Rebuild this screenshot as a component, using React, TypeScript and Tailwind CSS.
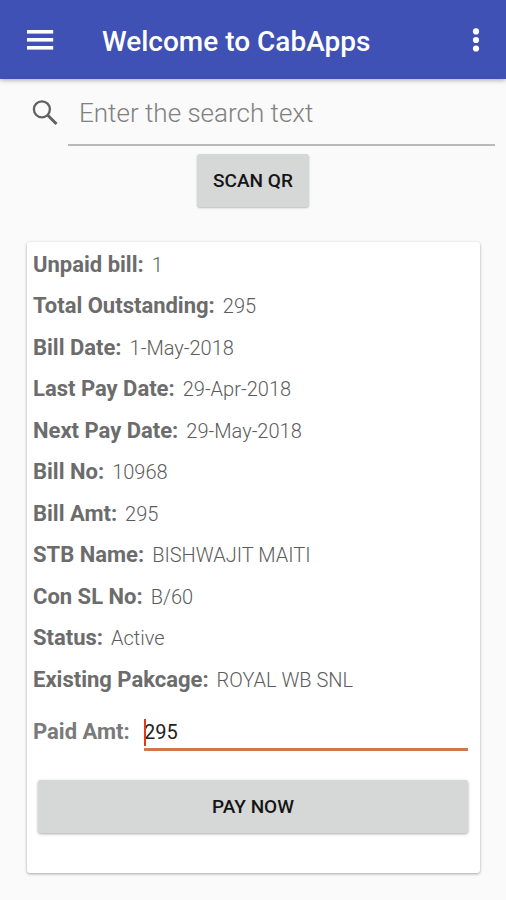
import { useState } from "react";

interface BillField {
  label: string;
  value: string;
}

const fields: BillField[] = [
  { label: "Unpaid bill:", value: "1" },
  { label: "Total Outstanding:", value: "295" },
  { label: "Bill Date:", value: "1-May-2018" },
  { label: "Last Pay Date:", value: "29-Apr-2018" },
  { label: "Next Pay Date:", value: "29-May-2018" },
  { label: "Bill No:", value: "10968" },
  { label: "Bill Amt:", value: "295" },
  { label: "STB Name:", value: "BISHWAJIT MAITI" },
  { label: "Con SL No:", value: "B/60" },
  { label: "Status:", value: "Active" },
  { label: "Existing Pakcage:", value: "ROYAL WB SNL" },
];

function AppBar() {
  return (
    <header className="flex h-[79px] items-center bg-[#3f51b5] pr-5 pl-[27px] text-white shadow-[0_1px_5px_rgba(0,0,0,0.35)]">
      <button type="button" aria-label="Open menu" className="mr-12">
        <svg width="27" height="20" viewBox="0 0 27 20" fill="currentColor">
          <rect width="26.2" height="3.6" />
          <rect y="8" width="26.2" height="3.6" />
          <rect y="16" width="26.2" height="3.6" />
        </svg>
      </button>
      <h1 className="flex-1 pt-1 text-[28px] leading-8 font-medium whitespace-nowrap">Welcome to CabApps</h1>
      <button type="button" aria-label="More options">
        <svg width="20" height="24" viewBox="0 0 20 24" fill="currentColor">
          <circle cx="10" cy="3.4" r="3.1" />
          <circle cx="10" cy="12" r="3.1" />
          <circle cx="10" cy="20.5" r="3.1" />
        </svg>
      </button>
    </header>
  );
}

function SearchBar() {
  return (
    <form role="search" className="flex pr-[11px] pl-8" onSubmit={(e) => e.preventDefault()}>
      <label htmlFor="search" aria-label="Search" className="w-9 shrink-0 pt-5 text-[#626262]">
        <svg width="27" height="27" viewBox="0 0 27 27" fill="none" stroke="currentColor">
          <circle cx="9.9" cy="10.3" r="8" strokeWidth="2.3" />
          <path d="M15.5 16l9 9" strokeWidth="3" />
        </svg>
      </label>
      <input
        id="search"
        type="text"
        placeholder="Enter the search text"
        className="h-[67px] min-w-0 flex-1 border-b-2 border-[#b9b9b9] pt-[2px] pl-[11px] text-[26px] font-light text-[#333] outline-none placeholder:text-[#808080]"
      />
    </form>
  );
}

function BillCard() {
  const [amount, setAmount] = useState("295");

  return (
    <section className="mt-[35px] mr-[26px] ml-[27px] rounded-[3px] bg-white pb-10 shadow-[0_1px_3px_rgba(0,0,0,0.35)]">
      <dl className="grid min-h-[459px] auto-rows-fr pt-[3px] pl-[6px]">
        {fields.map((field) => (
          <div key={field.label} className="flex items-baseline gap-2">
            <dt className="text-[22px] leading-10 font-bold text-[#6c6c6c]">{field.label}</dt>
            <dd className="text-xl leading-10 font-light text-[#5c5c5c]">{field.value}</dd>
          </div>
        ))}
      </dl>
      <div className="mt-[14px] flex items-start pr-3 pl-[6px]">
        <label htmlFor="paid" className="w-[111px] pt-px text-[22px] leading-8 font-bold text-[#7a7a7a]">
          Paid Amt:
        </label>
        <div className="relative min-w-0 flex-1">
          <input
            id="paid"
            type="text"
            inputMode="numeric"
            value={amount}
            onChange={(e) => setAmount(e.target.value)}
            className="h-9 w-full border-b-3 border-[#d27650] pt-px text-xl text-[#222] caret-[#e53a1a] outline-none"
          />
          <span className="absolute top-1 left-0 h-[27px] w-[2px] bg-[#e53a1a]" />
        </div>
      </div>
      <div className="mt-[29px] pr-3 pl-[11px]">
        <button
          type="button"
          className="h-[53px] w-full rounded-[3px] bg-[#d6d7d7] pt-[2px] text-[19px] font-medium text-[#151515] shadow-[0_1px_3px_rgba(0,0,0,0.35)]"
        >
          PAY NOW
        </button>
      </div>
    </section>
  );
}

export default function App() {
  return (
    <div className="min-h-screen bg-[#fafafa] font-[Roboto,sans-serif]">
      <AppBar />
      <main>
        <SearchBar />
        <div className="mt-2 flex justify-center">
          <button
            type="button"
            className="h-[53px] rounded-[3px] bg-[#d6d7d7] px-4 pt-[2px] text-[19px] font-medium text-[#151515] shadow-[0_1px_2px_rgba(0,0,0,0.25)]"
          >
            SCAN QR
          </button>
        </div>
        <BillCard />
      </main>
    </div>
  );
}
